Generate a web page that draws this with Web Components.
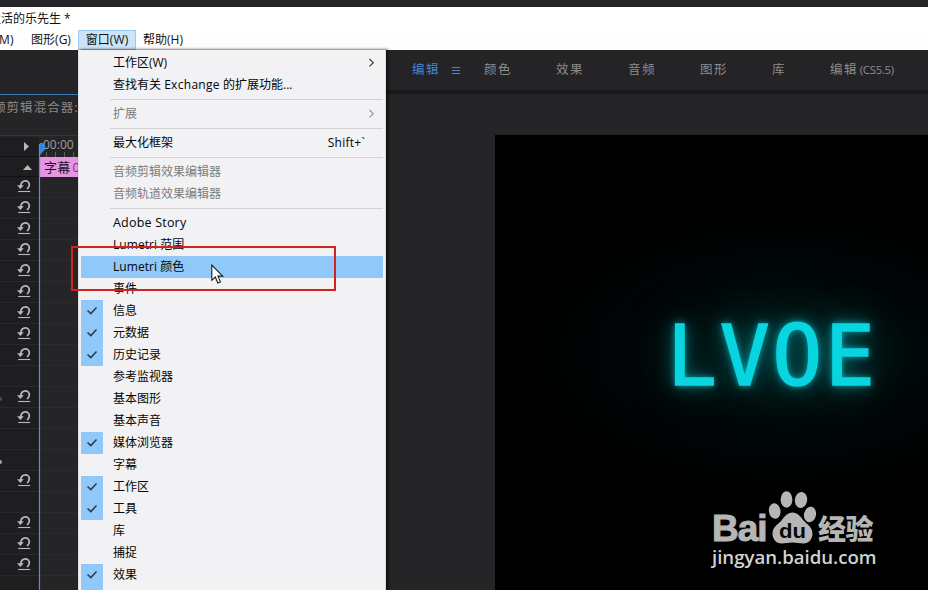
<!DOCTYPE html>
<html lang="zh-CN">
<head>
<meta charset="utf-8">
<title>活的乐先生 *</title>
<style>
  body {
    margin: 0;
    width: 928px;
    height: 590px;
    overflow: hidden;
    background: #252427;
    font: 12px "Open Sans", "Noto Sans CJK SC", sans-serif;
  }
</style>
</head>
<body>
<editor-window></editor-window>

<script>
const define = (name, html, setup) => {
  const template = document.createElement("template");
  template.innerHTML = html;
  customElements.define(name, class extends HTMLElement {
    constructor() {
      super();
      this.attachShadow({ mode: "open" }).appendChild(template.content.cloneNode(true));
      if (setup) setup(this, this.shadowRoot);
    }
  });
};

// ---- title + menu bar ----

define("title-bar", `
  <style>
    :host { display: flex; height: 22px; margin-top: 7px; background: #fff; color: #111; line-height: 24px; white-space: pre; overflow: hidden; }
    span { margin-left: -11px; }
  </style>
  <span><slot></slot></span>`);

define("menu-bar", `
  <style>
    :host { display: flex; height: 21px; background: #fefefe; color: #111; overflow: hidden; }
  </style>
  <slot></slot>`);

define("menu-title", `
  <style>
    :host { display: flex; box-sizing: border-box; height: 20px; flex: none; justify-content: center; width: 56px; border: 1px solid transparent; line-height: 18px; margin-top: 1px; white-space: nowrap; }
    :host([first]) { width: 37px; margin-left: -14px; }
    :host([open]) { width: 58px; background: #cce4f7; border-color: #9ccaf0; margin: 1px -1px 0 -1px; letter-spacing: .1px; }
  </style>
  <slot></slot>`);

// ---- drop-down ----

define("drop-menu", `
  <style>
    :host { position: absolute; left: 78px; top: 50px; width: 308px; height: 560px; box-sizing: border-box; padding: 2px 2px; background: #f2f1f3; color: #050505; border-left: 1px solid #e1e1e3; border-right: 1px solid #dedee0; box-shadow: 2px 0 3px #0e0e0f; }
    div { margin-left: -1px; margin-right: -1px; }
  </style>
  <div><slot></slot></div>`);

define("menu-row", `
  <style>
    :host { display: flex; height: 22px; line-height: 21px; padding-left: 1px; white-space: pre; }
    :host([current]) .row { background: #90c8f9; }
    :host([disabled]) { color: #7d7d80; }
    .row { display: flex; flex: 1; margin-right: 1px; }
    .mark { width: 22px; margin-right: 10px; }
    :host([checked]) .mark { background: #90c8f9; }
    svg { display: none; }
    .mark svg { margin: 5px; }
    :host([checked]) .mark svg, :host([sub]) .chevron { display: block; }
    .text { flex: 1; }
    .chevron { margin: 6px 8px 0 0; }
    .key { margin-right: 18px; letter-spacing: .25px; }
  </style>
  <div class="row">
    <div class="mark"><svg width="12" height="12" fill="none" stroke="#243c52" stroke-width="1.5"><path d="M1.5 5.5 4.8 8.6 10.5 2.6"/></svg></div>
    <div class="text"><slot></slot></div>
    <div class="key"><slot name="key"></slot></div>
    <svg class="chevron" width="7" height="10" fill="none" stroke="currentColor" stroke-width="1.1" opacity=".8"><path d="M1.5 1 5.3 4.7 1.5 8.4"/></svg>
  </div>`,
  (el, root) => {
    if (el.hasAttribute("sub")) root.querySelector(".key").remove();
  });

define("menu-line", `
  <style>
    :host { display: block; height: 1px; margin: 3px 1px 3px 30px; background: #d3d3d5; }
  </style>`);

// ---- left panel ----

define("reset-icon", `
  <style>
    :host { display: block; width: 14px; height: 14px; }
    svg { display: block; }
  </style>
  <svg width="14" height="14" fill="none" stroke="#b9b8ba">
    <path d="M3.6 7.3C4 4.2 5.7 1.9 8.3 1.9c2.3 0 4 1.7 4 3.9 0 1.8-.7 3-2.2 4.2" stroke-width="1.8"/>
    <path d="M0 6.2h6.8L3.4 10z" fill="#b9b8ba" stroke="none"/>
    <path d="M1.2 12.5h12" stroke-width="1.1"/>
  </svg>`);

define("track-row", `
  <style>
    :host { display: flex; box-sizing: border-box; height: 21px; }
    .head { width: 39px; box-sizing: border-box; background: #1e1d20; border-bottom: 1px solid #29282b; padding: 2px 0 0 17px; }
    .lane { flex: 1; border-bottom: 1px solid #2b2a2d; }
    :host([empty]) reset-icon { display: none; }
  </style>
  <div class="head"><reset-icon></reset-icon></div>
  <div class="lane"></div>`);

define("effect-panel", `
  <style>
    :host { display: block; width: 386px; overflow: hidden; background: #252427; }
    .gap { height: 44px; border-bottom: 1px solid #3c78b8; }
    .name { height: 40px; line-height: 25px; color: #89888b; font-size: 12.5px; letter-spacing: 1.05px; margin-left: -7px; white-space: nowrap; }
    .body { position: relative; border-top: 1px solid #353437; }
    .top { display: flex; height: 20px; padding-top: 1px; }
    .cell { width: 39px; box-sizing: border-box; border-bottom: 1px solid #111013; background: #1e1d20; }
    .ruler { color: #a09fa1; font: 12px/16px "Open Sans", sans-serif; padding-left: 4px; flex: 1; background: repeating-linear-gradient(90deg, transparent 0 7px, #5c5b5e 7px 8px, transparent 8px 9px) 0 15px / 100% 6px no-repeat; }
    .clip { flex: 1; height: 20px; background: #e695e3; color: #1b121b; font-size: 13px; line-height: 20px; padding-left: 5px; letter-spacing: .3px; white-space: pre; }
    .cell svg { display: block; }
    .line { position: absolute; left: 39px; top: 8px; width: 1px; height: 460px; background: #4796ee; box-shadow: 0 0 1px #3a82d0; }
    .knob { position: absolute; left: 40px; top: 7px; }
    .dots { position: absolute; left: -2px; width: 4px; height: 4px; border-radius: 2px; background: #a7a6a8; }
  </style>
  <div class="gap"></div>
  <div class="name">频剪辑混合器:</div>
  <div class="body">
    <div class="top">
      <div class="cell"><svg width="39" height="19"><path d="M24 5v9l5-4.5z" fill="#b9b8ba"/></svg></div>
      <div class="ruler">00:00</div>
    </div>
    <div class="top" style="padding-top:0">
      <div class="cell"><svg width="39" height="19"><path d="M23 13h9l-4.500-5z" fill="#b9b8ba"/></svg></div>
      <div class="clip">字幕<span style="color:#a22b62;margin-left:2px">01</span></div>
    </div>
    <div id="tracks"></div>
    <div class="line"></div>
    <svg class="knob" width="6" height="12"><path d="M0 0h5v6.500L0 12z" fill="#3486dd"/></svg>
    <div class="dots" style="top:261px;opacity:.35"></div>
    <div class="dots" style="top:324px"></div>
  </div>`,
  (el, root) => {
    // 1 = row with a reset button
    for (const c of "11111111101100101110") {
      const row = document.createElement("track-row");
      if (c === "0") row.toggleAttribute("empty", true);
      root.getElementById("tracks").append(row);
    }
  });

// ---- right side ----

define("workspace-bar", `
  <style>
    :host { display: flex; height: 40px; background: #242326; border-bottom: 4px solid #19181b; color: #8d8c8f; font-size: 12.5px; line-height: 39px; letter-spacing: 1.4px; padding-left: 26px; white-space: nowrap; }
    ::slotted(*) { width: 72px; flex: none; }
  </style>
  <slot></slot>`);

define("space-tab", `
  <style>
    :host { display: flex; }
    :host([active]) { color: #3f87d5; }
    svg { display: none; margin: 16px 0 0 11px; }
    :host([active]) svg { display: block; }
    ::slotted(small) { font-size: 11.5px; letter-spacing: -.35px; margin-left: 2px; }
  </style>
  <span><slot></slot></span>
  <svg width="10" height="10" fill="none" stroke="currentColor"><path d="M1 1.500h8M1 4.500h8M1 7.500h8"/></svg>`);

define("glow-text", `
  <style>
    :host { display: block; color: #08d5df; font: 83px/100px "DejaVu Sans Mono", monospace; letter-spacing: 2.700px; white-space: nowrap; -webkit-text-stroke: 1.6px #08d5df;
      text-shadow: 0 0 7px rgba(0,205,215,.85), 0 0 18px rgba(0,170,180,.65), 0 0 44px rgba(0,120,120,.5); }
  </style>
  <slot></slot>`);

define("site-mark", `
  <style>
    :host { display: block; color: #b6b6b6; width: 166px; }
    .logo { display: flex; height: 54px; align-items: flex-end; }
    b { font: bold 37px/37px "Liberation Sans", sans-serif; letter-spacing: -1px; width: 58px; margin-bottom: -3px; -webkit-text-stroke: 1px; }
    svg { width: 44px; height: 54px; display: block; flex: none; margin-left: 1px; }
    i { font: 900 28px/30px "Noto Sans CJK SC", sans-serif; margin: 0 0 1px 3px; letter-spacing: -.5px; white-space: nowrap; }
    p { margin: 0; font: 600 18.6px/26px "Open Sans", sans-serif; white-space: nowrap; color: #d2d2d2; }
  </style>
  <div class="logo">
    <b>Bai</b>
    <svg viewBox="0 0 44 54" fill="#b6b6b6" overflow="visible">
      <ellipse cx="3.700" cy="21" rx="5.800" ry="7.800" transform="rotate(-8 3.700 21)"/>
      <ellipse cx="15.500" cy="9.500" rx="5.900" ry="8.300"/>
      <ellipse cx="30" cy="10" rx="6.200" ry="8" transform="rotate(8 30 10)"/>
      <ellipse cx="39" cy="24.500" rx="6" ry="7.800" transform="rotate(12 39 24.500)"/>
      <path d="M21.500 22.500c5 0 8 4 11 8 4 4 9 7 9 13 0 6-4 10-9 10-4 0-7-1-11-1s-7 1-11 1c-5 0-9-4-9-10 0-6 5-9 9-13 3-4 6-8 11-8z"/>
      <text x="8" y="48" font-family="Liberation Sans" font-weight="bold" font-size="21" textLength="27" lengthAdjust="spacingAndGlyphs" fill="#080808">du</text>
    </svg>
    <i>经验</i>
  </div>
  <p>jingyan.baidu.com</p>`);

define("program-monitor", `
  <style>
    :host { display: block; padding: 41px 0 0 109px; }
    .screen { position: relative; height: 456px; background: radial-gradient(ellipse 270px 150px at 290px 218px, rgba(0,44,44,.65), rgba(0,16,16,.4) 55%, transparent) #000; overflow: hidden; }
    glow-text { position: absolute; left: 172px; top: 172px; }
    site-mark { position: absolute; left: 217px; top: 355px; }
  </style>
  <div class="screen">
    <glow-text>LVOE</glow-text>
    <site-mark></site-mark>
  </div>`);

// ---- overlays ----

define("mouse-pointer", `
  <style>
    :host { position: absolute; left: 211px; top: 264px; }
    svg { display: block; }
  </style>
  <svg width="14" height="21"><path d="M.8 1v15.300l3.500-3.300 2.500 6 2.600-1.100-2.500-5.800h4.800z" fill="#fff" stroke="#15202b" stroke-width="1.100"/></svg>`);

define("red-frame", `
  <style>
    :host { position: absolute; left: 71px; top: 246px; width: 261px; height: 41px; border: 2px solid #d4201f; }
  </style>`);

define("editor-window", `
  <style>
    :host { display: flex; flex-direction: column; position: relative; width: 928px; height: 590px; overflow: hidden; }
    main { display: flex; flex: 1; min-height: 0; }
    section { flex: 1; min-width: 0; }
    .en { font-size: 12px; letter-spacing: .3px; }
    .story { font-size: 12.500px; letter-spacing: .2px; }
  </style>
  <title-bar>生活的乐先生 *</title-bar>
  <menu-bar>
    <menu-title first>(M)</menu-title>
    <menu-title>图形(G)</menu-title>
    <menu-title open>窗口(W)</menu-title>
    <menu-title>帮助(H)</menu-title>
  </menu-bar>
  <main>
    <effect-panel></effect-panel>
    <section>
      <workspace-bar>
        <space-tab active>编辑</space-tab>
        <space-tab>颜色</space-tab>
        <space-tab>效果</space-tab>
        <space-tab>音频</space-tab>
        <space-tab>图形</space-tab>
        <space-tab style="width:58px">库</space-tab>
        <space-tab>编辑<small>(CS5.5)</small></space-tab>
      </workspace-bar>
      <program-monitor></program-monitor>
    </section>
  </main>
  <drop-menu>
    <menu-row sub>工作区(W)</menu-row>
    <menu-row>查找有关 <span class="en">Exchange</span> 的扩展功能...</menu-row>
    <menu-line></menu-line>
    <menu-row sub disabled>扩展</menu-row>
    <menu-line></menu-line>
    <menu-row>最大化框架<span slot="key">Shift+\`</span></menu-row>
    <menu-line></menu-line>
    <menu-row disabled>音频剪辑效果编辑器</menu-row>
    <menu-row disabled>音频轨道效果编辑器</menu-row>
    <menu-line></menu-line>
    <menu-row><span class="story">Adobe Story</span></menu-row>
    <menu-row><span class="en" style="letter-spacing:.05px">Lumetri</span> 范围</menu-row>
    <menu-row current><span class="en" style="letter-spacing:.05px">Lumetri</span> 颜色</menu-row>
    <menu-row>事件</menu-row>
    <menu-row checked>信息</menu-row>
    <menu-row checked>元数据</menu-row>
    <menu-row checked>历史记录</menu-row>
    <menu-row>参考监视器</menu-row>
    <menu-row>基本图形</menu-row>
    <menu-row>基本声音</menu-row>
    <menu-row checked>媒体浏览器</menu-row>
    <menu-row>字幕</menu-row>
    <menu-row checked>工作区</menu-row>
    <menu-row checked>工具</menu-row>
    <menu-row>库</menu-row>
    <menu-row>捕捉</menu-row>
    <menu-row checked>效果</menu-row>
    <menu-row checked></menu-row>
  </drop-menu>
  <red-frame></red-frame>
  <mouse-pointer></mouse-pointer>`);
</script>
</body>
</html>
